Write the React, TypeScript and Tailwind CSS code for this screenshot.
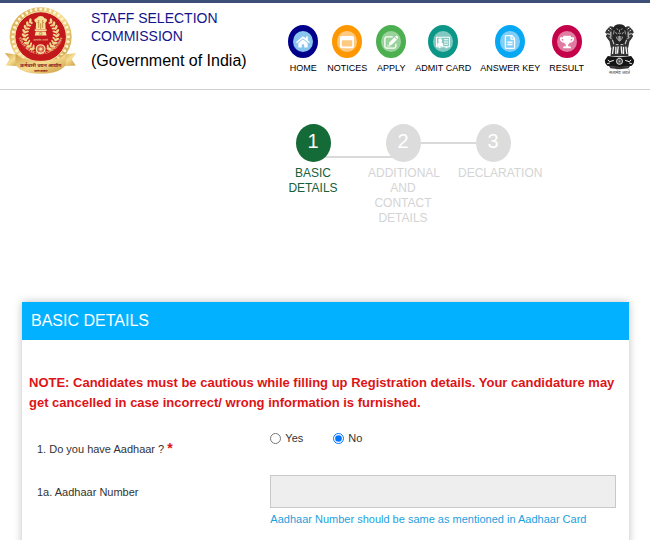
import React from 'react';
import { FaHome, FaRegFileAlt, FaTrophy } from 'react-icons/fa';

interface IconProps {
  className?: string;
}

interface MenuItem {
  label: string;
  icon: React.ComponentType<IconProps>;
  ring: string;
  inner: string;
}

interface Step {
  label: string;
  active?: boolean;
  line?: string;
}

const NoticeIcon: React.FC<IconProps> = ({ className }) => (
  <svg viewBox="0 0 16 16" className={className} aria-hidden="true">
    <path fill="currentColor" fillRule="evenodd" d="M2 1h12q2 0 2 2v10q0 2-2 2H2q-2 0-2-2V3q0-2 2-2zm1 5q-1 0-1 1v5q0 1 1 1h10q1 0 1-1V7q0-1-1-1z" />
  </svg>
);

const ApplyIcon: React.FC<IconProps> = ({ className }) => (
  <svg viewBox="0 0 16 16" className={className} aria-hidden="true">
    <path d="M10 2.2H3q-2 0-2 2V13q0 2 2 2h8.500q2 0 2-2v-3" fill="none" stroke="currentColor" strokeWidth="1.500" />
    <path d="M5.500 11.800l.6-3.300L12 2.600l2.700 2.700-5.900 5.900zM12.700 1.900l.8-.8q.8-.7 1.500 0l1 1q.7.800 0 1.600l-.7.800z" fill="currentColor" />
    <path d="M3.500 12.500h4" stroke="currentColor" strokeWidth="1" />
  </svg>
);

const AdmitCardIcon: React.FC<IconProps> = ({ className }) => (
  <svg viewBox="0 0 16 16" className={className} aria-hidden="true">
    <path d="M.6 2.600h14.800v10.800H.6z" fill="none" stroke="currentColor" strokeWidth="1.200" />
    <path d="M4.700 3.600q2.200 0 2.200 2.500 0 1.500-.9 2.300 2.200.4 2.200 2.100v2H1.500v-2q0-1.700 2-2.100-1-.8-1-2.300 0-2.500 2.200-2.500z" fill="currentColor" />
    <path d="M9 5.500h5M9 8h5M9 10.500h5" stroke="currentColor" strokeWidth="1.200" />
    <path d="M3 13.500h2v1.500H3zM11 13.500h2v1.500h-2z" fill="currentColor" />
  </svg>
);

const menuItems: MenuItem[] = [
  { label: 'HOME', icon: FaHome, ring: 'bg-[#00008b]', inner: 'bg-[#87c5ee]' },
  { label: 'NOTICES', icon: NoticeIcon, ring: 'bg-[#ff9800]', inner: 'bg-[#ffc980]' },
  { label: 'APPLY', icon: ApplyIcon, ring: 'bg-[#4caf50]', inner: 'bg-[#9ad29c]' },
  { label: 'ADMIT CARD', icon: AdmitCardIcon, ring: 'bg-[#0c9688]', inner: 'bg-[#80c8c0]' },
  { label: 'ANSWER KEY', icon: FaRegFileAlt, ring: 'bg-[#08a7f3]', inner: 'bg-[#80cff8]' },
  { label: 'RESULT', icon: FaTrophy, ring: 'bg-[#c4024a]', inner: 'bg-[#e07ba1]' },
];

const steps: Step[] = [
  { label: 'BASIC DETAILS', active: true, line: 'top-8' },
  { label: 'ADDITIONAL AND CONTACT DETAILS', line: 'top-[18px]' },
  { label: 'DECLARATION' },
];

const leafAngles = [-150, -136, -122, -108, -94, -80, -66, -52, -38];
const beadAngles = Array.from({ length: 36 }, (_, i) => i * 10);
const spokeAngles = Array.from({ length: 12 }, (_, i) => i * 15);

const CommissionLogo: React.FC = () => (
  <svg viewBox="13 18 230 208" className="h-[69px] w-[76px] shrink-0" role="img" aria-label="Staff Selection Commission">
    <defs>
      <linearGradient id="gold" x1="0" y1="0" x2="1" y2="1">
        <stop offset="0" stopColor="#cfa044" />
        <stop offset="0.5" stopColor="#f6dd92" />
        <stop offset="1" stopColor="#c8973a" />
      </linearGradient>
      <path id="ringText" d="M 56 105 A 69 71 0 0 0 192 105" />
    </defs>
    <ellipse cx="124" cy="111" rx="94" ry="90" fill="url(#gold)" />
    {/* beaded rim */}
    {beadAngles.map((a) => (
      <ellipse key={a} cx="124" cy="27" rx="4" ry="5" fill="#fff6d6" transform={`rotate(${a} 124 111)`} />
    ))}
    <ellipse cx="124" cy="111" rx="78" ry="76" fill="#c3181c" stroke="#f7e5a8" strokeWidth="3" />
    {/* laurel */}
    {leafAngles.map((a) => (
      <g key={a} fill="#f0d58b">
        <ellipse cx="124" cy="52" rx="4" ry="8" transform={`rotate(${a} 124 103) rotate(45 124 52)`} />
        <ellipse cx="124" cy="60" rx="3" ry="7" transform={`rotate(${a} 124 103) rotate(-25 124 60)`} />
        <ellipse cx="124" cy="52" rx="4" ry="8" transform={`rotate(${-a} 124 103) rotate(-45 124 52)`} />
        <ellipse cx="124" cy="60" rx="3" ry="7" transform={`rotate(${-a} 124 103) rotate(25 124 60)`} />
      </g>
    ))}
    <ellipse cx="124" cy="100" rx="34" ry="43" fill="#c3181c" />
    {/* lions on their base */}
    <g fill="#f6e09c">
      <path d="M113 54q2-6 11-6t11 6l7 3q3 5-1 9l-3 2 1 19h-30l1-19-3-2q-4-4-1-9z" />
      <path d="M106 88h36v5h-36zM109 95h30l3 12h-36z" />
    </g>
    <path d="M118 60v24M124 70v17M130 60v24M114 66l3 3M134 66l-3 3" stroke="#a86e20" strokeWidth="2" fill="none" />
    <circle cx="124" cy="101" r="4" fill="none" stroke="#a86e20" strokeWidth="2" />
    <text x="124" y="123" fontSize="9" textAnchor="middle" fill="#f2d58c" fontFamily="Noto Sans, sans-serif">
      सत्यमेव जयते
    </text>
    {/* wheel */}
    <circle cx="124" cy="148" r="13" fill="#c3181c" stroke="#f4dda0" strokeWidth="4" />
    {spokeAngles.map((a) => (
      <path key={a} d="M124 136v24" stroke="#f4dda0" strokeWidth="1" transform={`rotate(${a} 124 148)`} />
    ))}
    <circle cx="124" cy="148" r="4" fill="#f4dda0" />
    <text fontSize="11" fontWeight="700" fill="#f8e6b0" fontFamily="Liberation Serif, serif">
      <textPath href="#ringText" startOffset="50%" textAnchor="middle">
        STAFF SELECTION COMMISSION
      </textPath>
    </text>
    {/* ribbon */}
    <path d="M16 160l46 6 2 34-46-2 12-19z" fill="url(#gold)" />
    <path d="M232 160l-46 6-2 34 46-2-12-19z" fill="url(#gold)" />
    <path d="M50 192l14 8-1-16zM198 192l-14 8 1-16z" fill="#8c5f1c" />
    <path d="M48 162q20 22 76 22t76-22v34q-20 26-76 26t-76-26z" fill="url(#gold)" stroke="#e3bd68" />
    <text x="124" y="203" fontSize="15" fontWeight="700" textAnchor="middle" fill="#8d2018" fontFamily="Noto Sans, sans-serif">
      कर्मचारी चयन आयोग
    </text>
    <text x="124" y="216" fontSize="8" fontWeight="700" textAnchor="middle" fill="#8d2018" fontFamily="Noto Sans, sans-serif">
      भारत सरकार
    </text>
  </svg>
);

const NationalEmblem: React.FC = () => (
  <svg viewBox="29 26 92 156" className="h-[52px] w-[31px] shrink-0" role="img" aria-label="National emblem of India">
    {/* side lions */}
    <path d="M55 34q-9-4-13 3l-7 8-3 7 6 4-4 6 5 8 6 8 4 19 14 2V38z" fill="#333" />
    <path d="M95 34q9-4 13 3l7 8 3 7-6 4 4 6-5 8-6 8-4 19-14 2V38z" fill="#333" />
    {/* front lion */}
    <path d="M60 31q15-8 30 0l7 15-3 26-7 15H63l-7-15-3-26z" fill="#222" />
    <path
      d="M66 40l5 3M84 40l-5 3M70 53q5 4 10 0M75 43v8M63 50l4 7M87 50l-4 7M65 64l4 9M85 64l-4 9M75 61v18M59 45l-2 12M91 45l2 12M71 62l1 15M79 62l-1 15"
      fill="none"
      stroke="#ddd"
      strokeWidth="2"
    />
    <path
      d="M40 44l5 3M110 44l-5 3M38 55l9 2M112 55l-9 2M44 64l8 8M106 64l-8 8M49 49v17M101 49v17M45 37l6 5M105 37l-6 5M54 74l5 15M96 74l-5 15"
      fill="none"
      stroke="#ddd"
      strokeWidth="3"
    />
    {/* legs */}
    <path d="M51 91l8-6 9 5 7-5 7 5 9-5 8 6 3 32H48z" fill="#333" />
    <path d="M57 94l-3 22M64 94v22M71 93l-2 22M80 93l2 22M87 94v22M94 94l3 22" fill="none" stroke="#f5f5f5" strokeWidth="4" />
    {/* abacus */}
    <path d="M40 122q35 7 70 0l9 13q1 10-7 16-37 8-74 0-8-6-7-16z" fill="#151515" />
    <circle cx="75" cy="138" r="9" fill="#222" stroke="#eee" strokeWidth="3" />
    <path d="M75 130v16M67 138h16M69 132l12 12M81 132l-12 12" stroke="#eee" strokeWidth="1" />
    <path d="M40 134l6 5 12-4M38 145l8-2M110 134l-6 5-12-4M112 145l-8-2" fill="none" stroke="#eee" strokeWidth="3" />
    <path d="M43 151q32 7 64 0l-5 8q-27 5-54 0z" fill="#333" />
    <text x="75" y="175" fontSize="13" textAnchor="middle" fill="#444" fontFamily="Noto Sans, sans-serif">
      सत्यमेव जयते
    </text>
  </svg>
);

const Header: React.FC = () => (
  <header className="flex items-start border-t-[3px] border-b border-t-[#3d4f78] border-b-[#cfcfcf] pr-[15px] pb-[13px] pl-1">
    <div className="pt-[3px]">
      <CommissionLogo />
    </div>
    <div className="flex-1 pt-[6px] pl-[11px]">
      <h1 className="text-sm leading-[18px] text-[#14148a]">
        STAFF SELECTION
        <br />
        COMMISSION
      </h1>
      <p className="pt-1 text-base leading-6 text-black">(Government of India)</p>
    </div>
    <nav className="flex gap-[9px] pt-[22px]">
      {menuItems.map(({ label, icon: Icon, ring, inner }) => (
        <a key={label} href="#" className="flex flex-col items-center">
          <span className={`flex h-[33px] w-[30px] items-center justify-center rounded-[50%] ${ring}`}>
            <span className={`flex h-[21px] w-5 items-center justify-center rounded-[50%] text-white ${inner}`}>
              <Icon className="size-[14px]" />
            </span>
          </span>
          <span className="pt-1 text-[9px] leading-3 whitespace-nowrap text-black">{label}</span>
        </a>
      ))}
    </nav>
    <div className="pt-[21px] pl-5">
      <NationalEmblem />
    </div>
  </header>
);

const Stepper: React.FC = () => (
  <ol className="flex justify-end pt-[34px] pr-[112px]">
    {steps.map((step, index) => (
      <li key={step.label} className={`relative w-[90px] px-[10px] text-center ${step.active ? 'text-[#17603a]' : 'text-[#d4d4d4]'}`}>
        {step.line && <span className={`absolute left-1/2 h-[2px] w-[90px] bg-[#dadada] ${step.line}`} />}
        <span
          className={`relative z-10 mx-auto flex h-[38px] w-[35px] items-center justify-center rounded-[50%] pb-1 text-xl text-white ${
            step.active ? 'bg-[#156b38]' : 'bg-[#dcdcdc]'
          }`}
        >
          {index + 1}
        </span>
        <span className="block pt-1 text-xs leading-[15px]">{step.label}</span>
      </li>
    ))}
  </ol>
);

const BasicDetails: React.FC = () => (
  <section className="mt-[76px] mr-[21px] ml-[22px] bg-white pb-10 shadow-[0_0_8px_rgba(0,0,0,0.25)]">
    <h2 className="bg-[#02b1ff] px-[9px] text-base leading-[38px] text-white">BASIC DETAILS</h2>
    <form className="px-[7px] pt-[33px] text-[#333]">
      <p className="text-[13px] leading-5 font-bold text-[#dd1417]">
        NOTE: Candidates must be cautious while filling up Registration details. Your candidature may get cancelled in case incorrect/ wrong
        information is furnished.
      </p>

      <fieldset aria-labelledby="aadhaarQuestion" className="grid grid-cols-[27fr_40fr] pt-[17px] pr-[6px] pl-2 text-[11px] leading-4">
        <span id="aadhaarQuestion" className="pt-[10px]">
          1. Do you have Aadhaar ? <span className="text-sm leading-4 font-bold text-[#dd1417]">*</span>
        </span>
        <div className="flex gap-[30px]">
          <label className="flex h-4 items-center gap-1">
            <input type="radio" name="aadhaar" value="yes" className="size-[11px]" />
            Yes
          </label>
          <label className="flex h-4 items-center gap-1">
            <input type="radio" name="aadhaar" value="no" defaultChecked className="size-[11px]" />
            No
          </label>
        </div>
      </fieldset>

      <div className="grid grid-cols-[27fr_40fr] pt-[18px] pr-[6px] pl-2 text-[11px] leading-4">
        <label htmlFor="aadhaarNumber" className="pt-[9px]">
          1a. Aadhaar Number
        </label>
        <div>
          <input id="aadhaarNumber" type="text" disabled className="block h-[33px] w-full border border-[#c8c8c8] bg-[#eeeeee] px-2" />
          <p className="pt-[3px] text-[#1d9fe0]">Aadhaar Number should be same as mentioned in Aadhaar Card</p>
        </div>
      </div>
    </form>
  </section>
);

export default function App() {
  return (
    <div className="min-h-screen bg-white font-['Liberation_Sans',Arial,sans-serif]">
      <Header />
      <main>
        <Stepper />
        <BasicDetails />
      </main>
    </div>
  );
}
